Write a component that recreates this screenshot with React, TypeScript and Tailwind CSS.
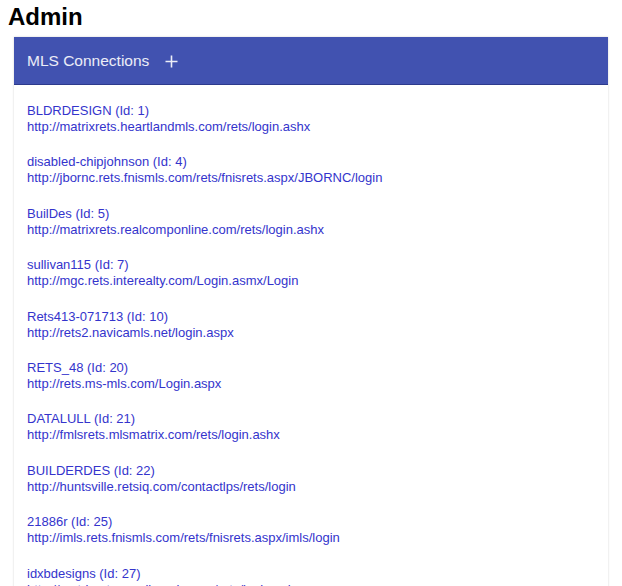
import React from 'react';

const connections = [
  { id: 1, name: 'BLDRDESIGN', url: 'http://matrixrets.heartlandmls.com/rets/login.ashx' },
  { id: 4, name: 'disabled-chipjohnson', url: 'http://jbornc.rets.fnismls.com/rets/fnisrets.aspx/JBORNC/login' },
  { id: 5, name: 'BuilDes', url: 'http://matrixrets.realcomponline.com/rets/login.ashx' },
  { id: 7, name: 'sullivan115', url: 'http://mgc.rets.interealty.com/Login.asmx/Login' },
  { id: 10, name: 'Rets413-071713', url: 'http://rets2.navicamls.net/login.aspx' },
  { id: 20, name: 'RETS_48', url: 'http://rets.ms-mls.com/Login.aspx' },
  { id: 21, name: 'DATALULL', url: 'http://fmlsrets.mlsmatrix.com/rets/login.ashx' },
  { id: 22, name: 'BUILDERDES', url: 'http://huntsville.retsiq.com/contactlps/rets/login' },
  { id: 25, name: '21886r', url: 'http://imls.rets.fnismls.com/rets/fnisrets.aspx/imls/login' },
  { id: 27, name: 'idxbdesigns', url: 'http://matrixrets.carolinamls.com/rets/login.ashx' }
];

export default function App() {
  return (
    <div className="min-h-[586px] bg-white font-['Liberation_Sans',Arial,sans-serif] text-black">
      <h1 className="px-2 pt-[3px] text-[24px] font-bold leading-[28px]">Admin</h1>

      <div className="mx-[14px] mt-[6px] bg-white shadow-[0_0_2px_rgba(0,0,0,0.18)]">
        {/* header */}
        <div className="flex h-12 items-center border-b border-[#2d3a8c] bg-[#4152b0] px-[13px] pt-px text-white/90">
          <span className="text-[15.5px]">MLS Connections</span>
          <svg className="ml-[16px]" width="13" height="13" viewBox="0 0 13 13" fill="none" stroke="currentColor" strokeWidth="1.6">
            <path d="M6.5 0.5v12M0.5 6.5h12" />
          </svg>
        </div>

        <div className="px-[13px] pt-[18px]">
          {connections.map((c) => (
            <div key={c.id} className="mb-[19.4px] text-[13px] leading-4 text-[#3434cc]">
              <div>{c.name} (Id: {c.id})</div>
              <div>{c.url}</div>
            </div>
          ))}
        </div>
      </div>
    </div>
  );
}
